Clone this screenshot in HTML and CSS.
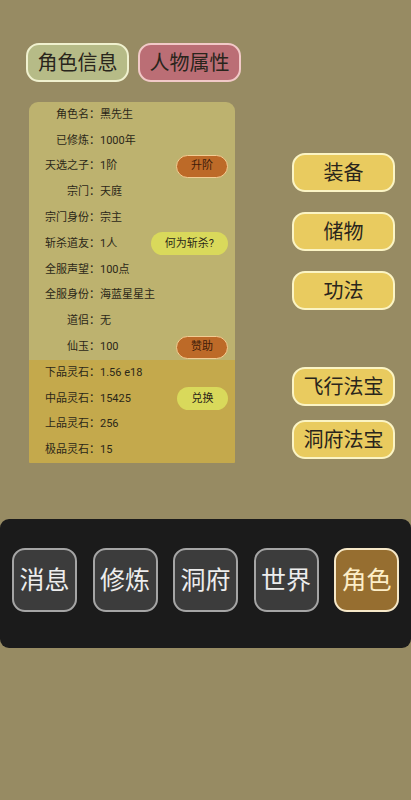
FILE: index.html
```html
<!DOCTYPE html>
<html lang="zh-CN">
<head>
<meta charset="utf-8">
<meta name="viewport" content="width=device-width, initial-scale=1">
<title>角色</title>
<link rel="stylesheet" href="styles.css">
</head>
<body>
<header class="tabs">
  <button class="tab tab-info" type="button">角色信息</button>
  <button class="tab tab-attr" type="button">人物属性</button>
</header>
<main class="content">
  <section class="panel">
    <dl class="rows profile">
      <div class="row"><dt>角色名：</dt><dd>黑先生</dd></div>
      <div class="row"><dt>已修炼：</dt><dd>1000年</dd></div>
      <div class="row"><dt>天选之子：</dt><dd>1阶</dd><dd class="action"><button class="chip chip-orange" type="button">升阶</button></dd></div>
      <div class="row"><dt>宗门：</dt><dd>天庭</dd></div>
      <div class="row"><dt>宗门身份：</dt><dd>宗主</dd></div>
      <div class="row"><dt>斩杀道友：</dt><dd>1人</dd><dd class="action"><button class="chip chip-lime" type="button">何为斩杀?</button></dd></div>
      <div class="row"><dt>全服声望：</dt><dd>100点</dd></div>
      <div class="row"><dt>全服身份：</dt><dd>海蓝星星主</dd></div>
      <div class="row"><dt>道侣：</dt><dd>无</dd></div>
      <div class="row"><dt>仙玉：</dt><dd>100</dd><dd class="action"><button class="chip chip-orange" type="button">赞助</button></dd></div>
    </dl>
    <dl class="rows stones">
      <div class="row"><dt>下品灵石：</dt><dd>1.56 e18</dd></div>
      <div class="row"><dt>中品灵石：</dt><dd>15425</dd><dd class="action"><button class="chip chip-lime" type="button">兑换</button></dd></div>
      <div class="row"><dt>上品灵石：</dt><dd>256</dd></div>
      <div class="row"><dt>极品灵石：</dt><dd>15</dd></div>
    </dl>
  </section>
  <aside class="side">
    <div class="group bag">
      <button class="tab side-button" type="button">装备</button>
      <button class="tab side-button" type="button">储物</button>
      <button class="tab side-button" type="button">功法</button>
    </div>
    <div class="group treasure">
      <button class="tab side-button" type="button">飞行法宝</button>
      <button class="tab side-button" type="button">洞府法宝</button>
    </div>
  </aside>
</main>
<nav class="nav">
  <button class="nav-item" type="button">消息</button>
  <button class="nav-item" type="button">修炼</button>
  <button class="nav-item" type="button">洞府</button>
  <button class="nav-item" type="button">世界</button>
  <button class="nav-item active" type="button" aria-current="page">角色</button>
</nav>
</body>
</html>
```
FILE: styles.css
```css
* {
  box-sizing: border-box;
}

body {
  margin: 0;
  min-height: 100vh;
  background: #978b63;
  color: #2b2718;
  font-family: Roboto, "Noto Sans CJK SC", sans-serif;
}

button {
  margin: 0;
  padding: 0;
  font-family: inherit;
  color: inherit;
  cursor: pointer;
}

.tabs {
  display: flex;
  gap: 9px;
  padding: 43px 26px 0;
}

.tab {
  width: 103px;
  height: 39px;
  border: 2px solid;
  border-radius: 13px;
  font-size: 20px;
  line-height: 32px;
  color: #29251c;
}

.tab-info {
  background: #b6bb87;
  border-color: #f0f1cf;
}

.tab-attr {
  background: #bb6e75;
  border-color: #f2c9c8;
}

.content {
  display: flex;
  justify-content: space-between;
  padding: 20px 16px 0 29px;
}

.panel {
  width: 206px;
  border-radius: 9px 9px 1px 1px;
  overflow: hidden;
}

.rows {
  display: grid;
  grid-auto-rows: 1fr;
  margin: 0;
  padding: 0 7px 0 12px;
}

.profile {
  min-height: 258px;
  background: #bdb26f;
}

.stones {
  min-height: 103px;
  background: #c4a94c;
}

.row {
  display: flex;
  align-items: center;
  font-size: 11px;
  line-height: 16px;
}

dt {
  width: 59px;
  text-align: right;
  white-space: nowrap;
}

dd {
  margin: 0;
  white-space: nowrap;
}

.action {
  margin-left: auto;
}

.chip {
  display: block;
  min-width: 51px;
  height: 23px;
  padding: 0 14px;
  border: 0;
  border-radius: 12px;
  font-size: 11px;
  line-height: 16px;
}

.chip-orange {
  border: 1px solid #f3cd93;
  background: #bd6a28;
  color: #3f1c08;
}

.chip-lime {
  background: #d9d95b;
}

.side {
  width: 103px;
  padding-top: 51px;
}

.group {
  display: grid;
}

.bag {
  gap: 20px;
}

.treasure {
  gap: 14px;
  margin-top: 57px;
}

.side-button {
  background: #e9cb5f;
  border-color: #fbf4c4;
}

.nav {
  display: flex;
  justify-content: space-between;
  margin-top: 56px;
  padding: 29px 12px 36px;
  border-radius: 9px;
  background: #1b1b1b;
}

.nav-item {
  width: 65px;
  height: 64px;
  padding-top: 2px;
  border: 2px solid #a5a5a5;
  border-radius: 13px;
  background: #3c3c3c;
  color: #ededed;
  font-size: 25px;
  line-height: 40px;
}

.nav-item.active {
  border-color: #f6e8c8;
  background: #966e30;
  color: #fdeec8;
}
```
